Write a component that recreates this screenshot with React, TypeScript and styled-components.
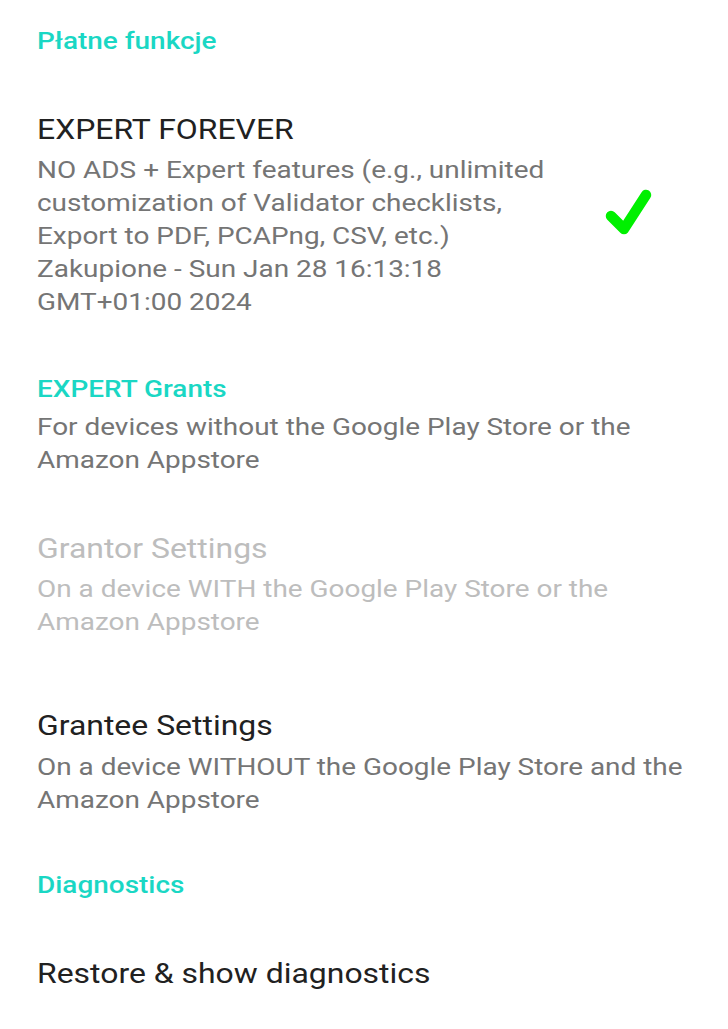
import React from "react";
import styled, { createGlobalStyle } from "styled-components";

const STRETCH = 1.14;

const Global = createGlobalStyle`
  html, body { margin: 0; padding: 0; background: #ffffff; }
  body { font-family: Roboto, "Noto Sans", "Liberation Sans", sans-serif; }
`;

const Screen = styled.div`
  width: 728px;
  min-height: 1029px;
  background: #ffffff;
  padding-top: 23.5px;
  box-sizing: border-box;
  overflow: hidden;
`;

/* The source screen is slightly wider than tall in its glyph proportions,
   so text blocks are stretched horizontally. $width is the visual width. */
const Stretch = styled.div<{ $width: number }>`
  width: ${(p) => p.$width / STRETCH}px;
  transform: scaleX(${STRETCH});
  transform-origin: 0 0;
`;

const Category = styled.div<{ $gap?: number }>`
  padding: 0 37px;
  margin-top: ${(p) => p.$gap ?? 0}px;
`;

const CategoryTitle = styled.div`
  color: #1ad7c4;
  font-size: 24.5px;
  font-weight: 500;
  line-height: 33px;
`;

const Item = styled.div<{ $gap?: number }>`
  display: flex;
  align-items: center;
  padding: 0 37px;
  margin-top: ${(p) => p.$gap ?? 54}px;
`;

const ItemText = styled.div<{ $width: number }>`
  flex: 0 0 auto;
  width: ${(p) => p.$width}px;
`;

const Title = styled.div<{ $disabled?: boolean }>`
  color: ${(p) => (p.$disabled ? "#bdbdbd" : "#212121")};
  font-size: 28px;
  line-height: 37px;
`;

const Summary = styled.div<{ $disabled?: boolean; $gap?: number }>`
  color: ${(p) => (p.$disabled ? "#bdbdbd" : "#757575")};
  font-size: 24.5px;
  line-height: 33px;
  margin-top: ${(p) => p.$gap ?? 5}px;
`;

const Widget = styled.div`
  flex: 0 0 auto;
  width: 108px;
  display: flex;
  justify-content: center;
  align-items: center;
`;

const Check = () => (
  <svg width="56" height="54" viewBox="0 0 56 54" aria-hidden="true">
    <path
      d="M13 29 L26 42 L48 8"
      fill="none"
      stroke="#00f000"
      strokeWidth="10.5"
      strokeLinecap="round"
      strokeLinejoin="round"
    />
  </svg>
);

const FULL = 654;

export default function App() {
  return (
    <>
      <Global />
      <Screen>
        <Category>
          <Stretch $width={FULL}>
            <CategoryTitle>Płatne funkcje</CategoryTitle>
          </Stretch>
        </Category>

        <Item>
          <ItemText $width={535}>
            <Stretch $width={535}>
              <Title>EXPERT FOREVER</Title>
              <Summary>
                NO ADS + Expert features (e.g., unlimited customization of Validator checklists,
                Export to PDF, PCAPng, CSV, etc.)
                <br />
                Zakupione - Sun Jan 28 16:13:18 GMT+01:00 2024
              </Summary>
            </Stretch>
          </ItemText>
          <Widget>
            <Check />
          </Widget>
        </Item>

        <Category $gap={54}>
          <Stretch $width={FULL}>
            <CategoryTitle>EXPERT Grants</CategoryTitle>
            <Summary>For devices without the Google Play Store or the Amazon Appstore</Summary>
          </Stretch>
        </Category>

        <Item>
          <ItemText $width={FULL}>
            <Stretch $width={FULL}>
              <Title $disabled>Grantor Settings</Title>
              <Summary $disabled>On a device WITH the Google Play Store or the Amazon Appstore</Summary>
            </Stretch>
          </ItemText>
        </Item>

        <Item $gap={69}>
          <ItemText $width={FULL}>
            <Stretch $width={FULL}>
              <Title>Grantee Settings</Title>
              <Summary $gap={6}>On a device WITHOUT the Google Play Store and the Amazon Appstore</Summary>
            </Stretch>
          </ItemText>
        </Item>

        <Category $gap={52}>
          <Stretch $width={FULL}>
            <CategoryTitle>Diagnostics</CategoryTitle>
          </Stretch>
        </Category>

        <Item>
          <ItemText $width={FULL}>
            <Stretch $width={FULL}>
              <Title>Restore &amp; show diagnostics</Title>
            </Stretch>
          </ItemText>
        </Item>
      </Screen>
    </>
  );
}
